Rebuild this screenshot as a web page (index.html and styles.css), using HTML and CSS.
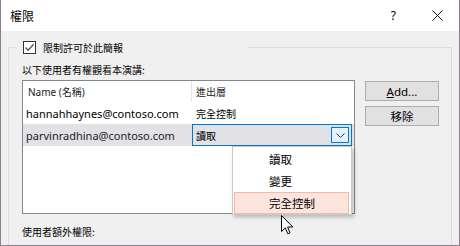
FILE: index.html
```html
<!DOCTYPE html>
<html lang="zh-Hant">
<head>
  <meta charset="UTF-8">
  <title>權限</title>
  <link rel="stylesheet" href="styles.css">
</head>
<body>
  <div class="window">
    <div class="titlebar">
      <span class="title">權限</span>
      <span class="help">?</span>
      <span class="close">
        <svg width="11" height="11" viewBox="0 0 11 11"><path d="M0.5 0.5 L10.5 10.5 M10.5 0.5 L0.5 10.5" stroke="#111" stroke-width="1" fill="none"/></svg>
      </span>
    </div>

    <div class="content">
      <fieldset class="group">
        <legend class="group-legend">
          <span class="checkbox">
            <svg width="11" height="11" viewBox="0 0 11 11"><path d="M1.5 5.5 L4.2 8.3 L9.6 2.2" stroke="#555" stroke-width="1.3" fill="none"/></svg>
          </span>
          <span>限制許可於此簡報</span>
        </legend>

        <div class="label">以下使用者有權觀看本演講:</div>

        <div class="users-row">
          <div class="listbox">
            <div class="list-head">
              <div class="col-name">Name (名稱)</div>
              <div class="col-access">進出層</div>
            </div>
            <div class="list-row">
              <div class="col-name">hannahhaynes@contoso.com</div>
              <div class="col-access">完全控制</div>
            </div>
            <div class="list-row selected">
              <div class="col-name">parvinradhina@contoso.com</div>
              <div class="combo">
                <span>讀取</span>
                <span class="combo-btn">
                  <svg width="9" height="5" viewBox="0 0 9 5"><path d="M0.5 0.5 L4.5 4.5 L8.5 0.5" stroke="#333" stroke-width="1" fill="none"/></svg>
                </span>
              </div>
            </div>

            <ul class="dropdown">
              <li>讀取</li>
              <li>變更</li>
              <li class="hot">完全控制</li>
            </ul>

            <svg class="cursor" width="13" height="20" viewBox="0 0 13 20"><path d="M0.5 0.5 L0.5 16.5 L4.3 12.8 L6.8 18.8 L9 17.9 L6.6 12 L11.8 12 Z" fill="#fff" stroke="#000" stroke-width="1" stroke-linejoin="miter"/></svg>
          </div>

          <div class="buttons">
            <button class="btn"><u>A</u>dd...</button>
            <button class="btn">移除</button>
          </div>
        </div>

        <div class="label extra">使用者額外權限:</div>
      </fieldset>
    </div>
  </div>
</body>
</html>
```

FILE: styles.css
```css
body {
  margin: 0;
  background: #fff;
  font-family: "Noto Sans", "Noto Sans CJK TC", sans-serif;
  color: #000;
}
.window {
  width: 460px;
  height: 246px;
  box-sizing: border-box;
  border: 1px solid #8e7f8e;
  border-top: none;
  background: #f0f0f0;
  overflow: hidden;
  display: flex;
  flex-direction: column;
}
.titlebar {
  height: 31px;
  flex: none;
  background: #fff;
  display: flex;
  align-items: center;
}
.title {
  margin-left: 9px;
  font-family: "Noto Sans CJK TC", sans-serif;
  font-size: 12px;
  flex: 1;
}
.help {
  font-family: "Noto Sans", sans-serif;
  font-size: 12px;
  margin-right: 36px;
}
.close {
  display: flex;
  margin-right: 16px;
}
.content {
  flex: 1;
  padding-left: 7px;
}
.group {
  width: 444px;
  box-sizing: border-box;
  margin: 9px 0 0;
  padding: 8px 0 0 13px;
  border: 1px solid #dcdcdc;
  border-bottom: none;
  min-height: 260px;
}
.group-legend {
  display: flex;
  align-items: center;
  height: 15px;
  width: 232px;
  padding: 0 0 0 8px;
  margin-left: -7px;
  box-sizing: border-box;
  font-family: "Noto Sans CJK TC", sans-serif;
  font-size: 10px;
}
.checkbox {
  width: 11px;
  height: 11px;
  border: 1px solid #333;
  background: #fff;
  display: flex;
  margin-right: 7px;
}
.label {
  font-family: "Noto Sans CJK TC", sans-serif;
  font-size: 10px;
  line-height: 14px;
  margin-bottom: 3px;
}
.label.extra {
  margin-top: 11px;
}
.users-row {
  display: flex;
  align-items: flex-start;
}
.listbox {
  position: relative;
  width: 333px;
  height: 134px;
  box-sizing: border-box;
  border: 1px solid #828790;
  background: #fff;
}
.list-head,
.list-row {
  display: flex;
  align-items: center;
}
.list-head {
  height: 21px;
  font-size: 10px;
  color: #222;
}
.list-head .col-name {
  border-right: 1px solid #e5e5e5;
  height: 21px;
  padding-left: 5px;
  display: flex;
  align-items: center;
}
.col-name {
  width: 169px;
  box-sizing: border-box;
  padding-left: 3px;
  font-size: 11px;
  white-space: nowrap;
}
.list-head .col-name {
  font-size: 10px;
}
.col-access {
  padding-left: 4px;
  font-family: "Noto Sans CJK TC", sans-serif;
  font-size: 10px;
}
.list-row {
  height: 22px;
}
.list-row.selected {
  background: #e1e1e6;
  color: #2a1a22;
}
.combo {
  width: 160px;
  height: 22px;
  box-sizing: border-box;
  border: 1px solid #0078d7;
  display: flex;
  align-items: center;
  justify-content: space-between;
  padding-left: 3px;
  font-family: "Noto Sans CJK TC", sans-serif;
  font-size: 10px;
  color: #000;
}
.combo-btn {
  width: 18px;
  height: 16px;
  box-sizing: border-box;
  border: 1px solid #0078d7;
  background: #e5f1fb;
  margin-right: 2px;
  display: flex;
  align-items: center;
  justify-content: center;
}
.dropdown {
  position: absolute;
  left: 209px;
  top: 65px;
  width: 120px;
  height: 69px;
  box-sizing: border-box;
  margin: 0;
  padding: 1px 2px 0 1px;
  list-style: none;
  background: #fff;
  border: 1px solid #c8c8c8;
  box-shadow: 2px 2px 4px rgba(0, 0, 0, 0.25);
  font-family: "Noto Sans CJK TC", sans-serif;
  font-size: 11.5px;
}
.dropdown li {
  height: 22px;
  display: flex;
  align-items: center;
  padding-left: 34px;
  box-sizing: border-box;
  border: 1px solid transparent;
}
.dropdown li.hot {
  background: #fde5dd;
  border-color: #f6b9a2;
}
.cursor {
  position: absolute;
  left: 258px;
  top: 134px;
}
.buttons {
  display: flex;
  flex-direction: column;
  gap: 5px;
  margin: 1px 0 0 10px;
}
.btn {
  width: 74px;
  height: 20px;
  padding: 0;
  background: #e1e1e1;
  border: 1px solid #adadad;
  font-family: "Noto Sans", "Noto Sans CJK TC", sans-serif;
  font-size: 11.5px;
  color: #000;
}
```
